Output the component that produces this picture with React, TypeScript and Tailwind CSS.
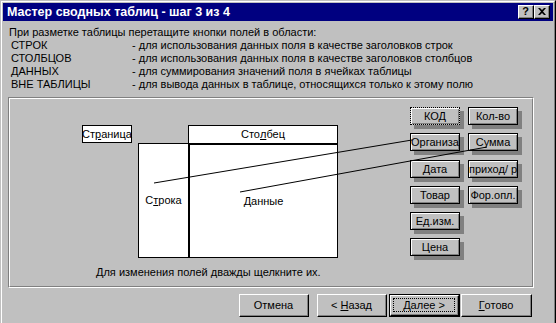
import React from 'react'

const FIELDS = [
  { label: 'КОД', x: 400, y: 8, focused: true },
  { label: 'Организация', x: 400, y: 34 },
  { label: 'Дата', x: 400, y: 61 },
  { label: 'Товар', x: 400, y: 87 },
  { label: 'Ед.изм.', x: 400, y: 113 },
  { label: 'Цена', x: 400, y: 139 },
  { label: 'Кол-во', x: 458, y: 8 },
  { label: 'Сумма', x: 458, y: 34 },
  { label: 'приход/ расход', x: 458, y: 61 },
  { label: 'Фор.опл.', x: 458, y: 87 },
]

const AREAS = [
  ['СТРОК', '- для использования данных поля в качестве заголовков строк'],
  ['СТОЛБЦОВ', '- для использования данных поля в качестве заголовков столбцов'],
  ['ДАННЫХ', '- для суммирования значений поля в ячейках таблицы'],
  ['ВНЕ ТАБЛИЦЫ', '- для вывода данных в таблице, относящихся только к этому полю'],
]

function FieldButton({ label, x, y, focused }: { label: string; x: number; y: number; focused?: boolean }) {
  return (
    <div
      className={
        'absolute h-[18px] w-[50px] overflow-hidden whitespace-nowrap bg-[#c0c0c0] text-center text-[11px] leading-[16px] shadow-[inset_1px_1px_0_#fff,inset_-1px_-1px_0_#808080,4px_4px_0_#808080] ' +
        (focused ? 'border border-dotted border-black' : 'border border-black')
      }
      style={{ left: x, top: y }}
    >
      {label}
    </div>
  )
}

function WizardButton({ children, isDefault, className }: { children: React.ReactNode; isDefault?: boolean; className?: string }) {
  if (isDefault) {
    return (
      <div className={'h-[23px] w-[71px] border border-black ' + (className ?? '')}>
        <div className="h-full border-l border-t border-l-white border-t-white border-r border-b border-r-black border-b-black">
          <div className="h-full border-r border-b border-r-[#808080] border-b-[#808080] p-[2px]">
            <div className="flex h-full items-center justify-center border border-dotted border-black text-[11px]">
              {children}
            </div>
          </div>
        </div>
      </div>
    )
  }
  return (
    <div className={'h-[23px] w-[70px] border-l border-t border-l-white border-t-white border-r border-b border-r-black border-b-black ' + (className ?? '')}>
      <div className="flex h-full items-center justify-center border-r border-b border-r-[#808080] border-b-[#808080] text-[11px]">
        {children}
      </div>
    </div>
  )
}

function CaptionButton({ children, className }: { children: React.ReactNode; className?: string }) {
  return (
    <div className={'h-[14px] w-[16px] bg-[#c0c0c0] border-l border-t border-l-white border-t-white border-r border-b border-r-black border-b-black ' + (className ?? '')}>
      <div className="flex h-full items-center justify-center border-r border-b border-r-[#808080] border-b-[#808080] text-black">
        {children}
      </div>
    </div>
  )
}

export default function App() {
  return (
    <div className="h-[323px] w-[556px] overflow-hidden bg-[#c0c0c0] font-['Liberation_Sans',Arial,sans-serif] text-black">
      <div className="h-full border-l border-t border-l-[#c0c0c0] border-t-[#c0c0c0] border-r border-r-black">
        <div className="h-full border-l border-t border-l-white border-t-white border-r border-r-[#808080] p-px">
          {/* Title bar */}
          <div className="flex h-[18px] items-center justify-between bg-[#000080] pl-[4px] pr-[3px]">
            <span className="text-[12.5px] font-bold leading-none text-white">Мастер сводных таблиц - шаг 3 из 4</span>
            <div className="flex">
              <CaptionButton>
                <span className="text-[11px] font-bold leading-none">?</span>
              </CaptionButton>
              <CaptionButton>
                <svg width="8" height="7" viewBox="0 0 8 7">
                  <path d="M0 0h2l2 2 2-2h2L5 3.5 8 7H6L4 5 2 7H0l3-3.5z" fill="#000" />
                </svg>
              </CaptionButton>
            </div>
          </div>

          {/* Instructions */}
          <div className="ml-[6px] mt-[5px] text-[11px] leading-[13px]">
            <div>При разметке таблицы перетащите кнопки полей в области:</div>
            {AREAS.map(([name, desc]) => (
              <div key={name} className="flex">
                <span className="w-[123px] pl-[2px]">{name}</span>
                <span>{desc}</span>
              </div>
            ))}
          </div>

          {/* Layout panel */}
          <div className="ml-[5px] mt-[6px] h-[191px] w-[526px] border-l border-t border-l-[#808080] border-t-[#808080] border-r border-b border-r-white border-b-white">
            <div className="relative h-full border-l border-t border-l-white border-t-white border-r border-b border-r-[#808080] border-b-[#808080] text-[11px]">
              <div className="absolute left-[72px] top-[26px] flex h-[18px] w-[50px] items-center justify-center border border-black bg-white">
                Ст<span className="underline">р</span>аница
              </div>

              <div className="absolute left-[178px] top-[26px] flex h-[20px] w-[150px] items-center justify-center border-x border-t border-b-2 border-black bg-white">
                Сто<span className="underline">л</span>бец
              </div>

              <div className="absolute left-[128px] top-[44px] flex h-[115px] w-[52px] items-center justify-center border border-r-2 border-black bg-white">
                С<span className="underline">т</span>рока
              </div>

              <div className="absolute left-[180px] top-[46px] flex h-[113px] w-[148px] items-center justify-center border-r border-b border-black bg-white">
                <span className="underline">Д</span>анные
              </div>

              {FIELDS.map((f) => (
                <FieldButton key={f.label} {...f} />
              ))}

              <svg className="pointer-events-none absolute left-0 top-0" width="524" height="189">
                <line x1="144" y1="84" x2="402" y2="41" stroke="#000" strokeWidth="1" />
                <line x1="230" y1="93" x2="477" y2="48" stroke="#000" strokeWidth="1" />
              </svg>

              <div className="absolute left-[86px] top-[167px] leading-[13px]">
                Для изменения полей дважды щелкните их.
              </div>
            </div>
          </div>

          {/* Wizard buttons */}
          <div className="ml-[236px] mt-[6px] flex">
            <WizardButton>Отмена</WizardButton>
            <WizardButton className="ml-[8px]">
              &lt;&nbsp;<span className="underline">Н</span>азад
            </WizardButton>
            <WizardButton isDefault className="ml-[2px]">
              <span className="underline">Д</span>алее&nbsp;&gt;
            </WizardButton>
            <WizardButton className="ml-[1px] w-[71px]">
              <span className="underline">Г</span>отово
            </WizardButton>
          </div>
        </div>
      </div>
    </div>
  )
}
